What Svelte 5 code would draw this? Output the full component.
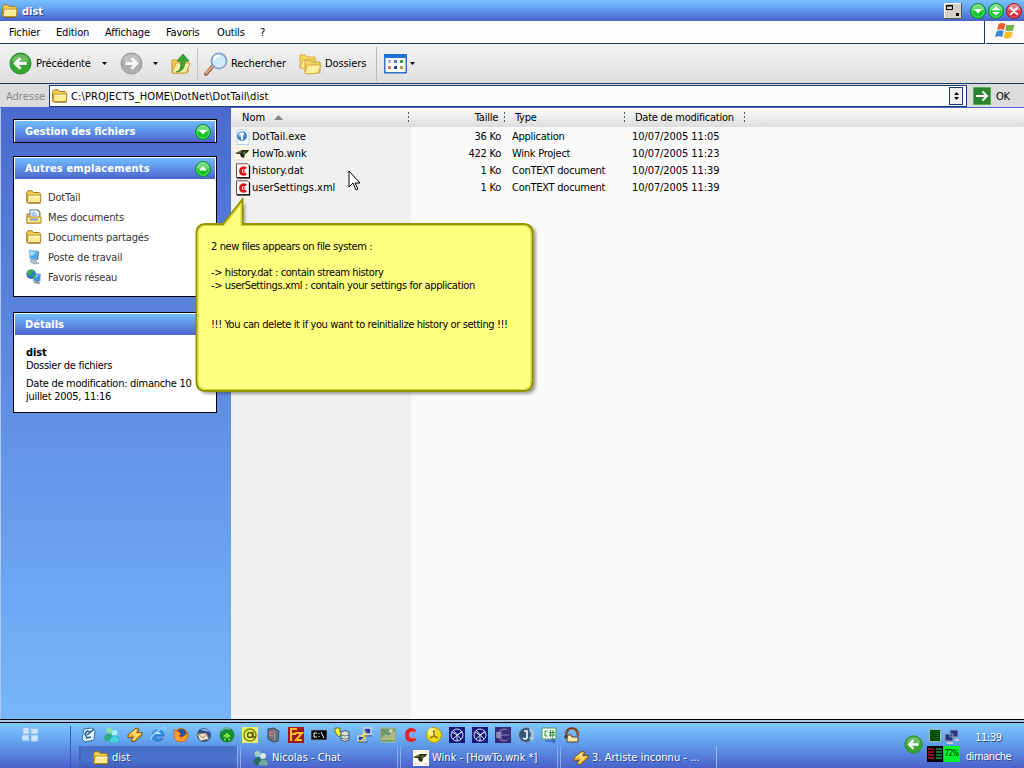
<script>
  const menus = [['Fichier', 47], ['Edition', 49], ['Affichage', 61], ['Favoris', 51], ['Outils', 43], ['?', 20]];
  const places = [
    ['folder', 'DotTail'],
    ['docs', 'Mes documents'],
    ['folder', 'Documents partagés'],
    ['computer', 'Poste de travail'],
    ['network', 'Favoris réseau'],
  ];
  const files = [
    ['exe', 'DotTail.exe', '36 Ko', 'Application', '10/07/2005 11:05'],
    ['wink', 'HowTo.wnk', '422 Ko', 'Wink Project', '10/07/2005 11:23'],
    ['context', 'history.dat', '1 Ko', 'ConTEXT document', '10/07/2005 11:39'],
    ['context', 'userSettings.xml', '1 Ko', 'ConTEXT document', '10/07/2005 11:39'],
  ];
  const launchers = ['desktop', 'msn', 'winamp', 'ie', 'firefox', 'thunderbird', 'tree', 'at', 'server', 'filezilla', 'cmd', 'database', 'putty', 'image', 'redc', 'smiley', 'cube', 'cube', 'eclipse', 'jedit', 'csharp', 'home'];
  const tasks = [['folder', 'dist'], ['chat', 'Nicolas - Chat'], ['wink', 'Wink - [HowTo.wnk *]'], ['winamp', '3. Artiste inconnu - ...']];
</script>

{#snippet icon(name, size = 16)}
  <svg class="icon" width={size} height={size} viewBox="0 0 16 16" aria-hidden="true">
    {#if name === 'folder'}
      <path d="M.7 13V3.2L2 1.8h4l1.4 1.7h5.8l1 1.1V13z" fill="#f3cf58" stroke="#a87b12" />
      <path d="M1 13.300 2 6.200h13L14.300 13.600H2z" fill="#ffeb94" stroke="#b88a1c" />
      <path d="M3 7.200h11" stroke="#fffbd2" />
      <path d="M2 14.500h12.400" stroke="#6b5a28" opacity=".6" />
    {:else if name === 'docs'}
      <path d="M1 14V5h3V1h8l2 2v11z" fill="#edc553" stroke="#a87b12" />
      <path d="M4 1h7l2.5 2.5V10H4z" fill="#f1f8ff" stroke="#6592c4" />
      <path d="M5.5 4h4M5.5 6h6" stroke="#629be0" />
      <path d="M1 8h14v6H1z" fill="#ffe58b" stroke="#b4881d" />
      <path d="M4 10.5h8" stroke="#75a4d1" stroke-width="2" />
    {:else if name === 'computer'}
      <path d="m3 1 9 1-1 9-7-1z" fill="#4aa9f3" stroke="#a6c4dc" />
      <path d="m4 2 6 1-4 4-2-1z" fill="#a9ddff" />
      <path d="m12 2 1 1-1 8-1 0z" fill="#42657f" />
      <path d="m6 10 4 1v2l3 1-4 1-5-2z" fill="#b9c6cf" stroke="#7d8d99" stroke-width=".6" />
    {:else if name === 'network'}
      <path d="m7 4 8 1-1 8-7-1z" fill="#3f8fe0" stroke="#b8d3e8" />
      <path d="m8 5 5 1-5 4z" fill="#8accff" />
      <path d="m10 12 3 1 1 2-7-1z" fill="#7c8b99" />
      <circle cx="5.2" cy="5.2" r="4.8" fill="#2a76c4" />
      <path d="M2 2c2-2 5-1 6 0L6 4 5 7 3 6 1 5zM7 6l3-1-1 4-2 1z" fill="#3daa4e" />
    {:else if name === 'exe'}
      <path d="M2 .5h9l3 3v12H2z" fill="#f8fcff" stroke="#b9d5e2" />
      <circle cx="7" cy="7" r="5" fill="#427fbd" /><circle cx="6" cy="5" r="3" fill="#9bc8ea" />
      <path d="M7 4v7M5 5h4" stroke="#fff" stroke-width="1.8" />
    {:else if name === 'wink'}
      <path d="M0 0h16v16H0z" fill="#fbfbe7" />
      <path d="M1 2h3M12 2h3M1 14h4M11 14h4" stroke="#f6dde0" stroke-width="2" />
      <path d="m0 7 3-1 4-2h7l-1 2-3 2-1 4-3-1-1-3H3z" fill="#29291b" />
      <path d="m8 6 3-1-2 4z" fill="#5e9451" /><path d="M3 6h4" stroke="#a89432" />
    {:else if name === 'context'}
      <path d="M1.500 .8h11l2 2v12h-13z" fill="#fff" stroke="#73494c" />
      <path d="M14.500 2.500v12.300H2" fill="none" stroke="#000" stroke-width="1.3" />
      <path d="M10.800 5.800C9.500 3.700 5.500 4.300 5.500 8s4 4.300 5.300 2.200" fill="none" stroke="#d5151c" stroke-width="2.800" />
      <path d="M8 6.500h2v1H9v1h1.500v1H8z" fill="#e9242a" />
    {:else if name === 'desktop'}
      <path d="m3 2 8-1 3 3-1 9-9 2-3-3z" fill="#e4f2fa" stroke="#356fa0" />
      <path d="M10 5 6 4 4 7l2 4 4-1M6 8l7-6" fill="none" stroke="#1c6199" stroke-width="1.5" />
    {:else if name === 'msn'}
      <circle cx="5" cy="3.5" r="3" fill="#8edfa2" /><path d="M0 10q3-5 7-3l3 3-4 4H1z" fill="#2cad82" />
      <circle cx="10.5" cy="6" r="3" fill="#a5f4f1" /><path d="M5 14q3-7 8-5l3 4-2 3H7z" fill="#42d2dc" stroke="#218ba2" stroke-width=".5" />
    {:else if name === 'chat'}
      <circle cx="4.5" cy="4" r="3" fill="#9bd0bc" /><path d="M0 11q4-6 7-3l2 4-2 3H2z" fill="#276d60" />
      <circle cx="10" cy="6" r="3" fill="#d3ede8" /><path d="M5 14q4-7 9-4l2 4-2 2H6z" fill="#6ba8a7" stroke="#285f62" stroke-width=".6" />
    {:else if name === 'winamp'}
      <path d="m1 8 8-7 3 1-2 4 5-1 0 3-8 7-3-1 2-4-5 1z" fill="#f5a51b" stroke="#6c5428" />
      <path d="m3 8 6-5-2 5 5-1-6 6" fill="none" stroke="#ffe782" stroke-width="1.5" />
    {:else if name === 'ie'}
      <path d="M14 9H5q1 4 5 3l3-1c-2 5-12 4-11-3S14 1 14 9z" fill="#3593df" stroke="#1355a1" stroke-width=".6" />
      <path d="M5 7q3-4 6 0" fill="#c5e9ff" /><path d="M1 13Q1 8 9 3t6 0" fill="none" stroke="#90cfff" stroke-width="1.5" />
    {:else if name === 'firefox'}
      <circle cx="8" cy="8" r="7" fill="#e76a11" /><circle cx="8.500" cy="6.500" r="4.500" fill="#2655a4" />
      <path d="M1 2q1 3 4 2l3 3-2 2q4 3 8-4l1 4c-2 8-13 8-14 0z" fill="#ff9c22" stroke="#ad3c0e" stroke-width=".5" />
    {:else if name === 'thunderbird'}
      <circle cx="8" cy="8" r="7" fill="#2b4e86" /><path d="m1 7 9-1 3 6-9 2z" fill="#eee7d2" stroke="#857261" />
      <path d="m2 7 5 4 4-4" fill="none" stroke="#9f7d63" /><path d="M4 3q6-4 10 2L9 4z" fill="#7db0e1" />
    {:else if name === 'tree'}
      <circle cx="8" cy="8" r="7.5" fill="#168c35" /><path d="M8 5 3 10h3l-2 4h3v-3h2v3h3l-2-4h3z" fill="#6fea3a" stroke="#0a552c" stroke-width=".5" /><path d="M2 4l4-3 5 1" fill="none" stroke="#5fb8a3" stroke-width="2" />
    {:else if name === 'at'}
      <path d="M0 0h16v16H0z" fill="#e8ee6f" /><circle cx="8" cy="8" r="6" fill="none" stroke="#7d8b00" stroke-width="1.6" />
      <circle cx="8" cy="8" r="2.5" fill="none" stroke="#585c00" stroke-width="1.5" /><path d="M11 5v5h3" fill="none" stroke="#585c00" stroke-width="1.5" />
    {:else if name === 'server'}
      <path d="m3 2 6-1 5 3-1 10-5 1-5-3z" fill="#66737a" stroke="#3a4a59" /><path d="m9 3 1 11" stroke="#9ba2a1" /><path d="M4 5l4 1M4 8l4 1" stroke="#db7c87" stroke-width="1.5" />
    {:else if name === 'filezilla'}
      <path d="M0 0h16v16H0z" fill="#a41414" /><path d="M3 14V2h6M3 7h5M7 6h7l-6 7h6" fill="none" stroke="#ffc12b" stroke-width="2" />
    {:else if name === 'cmd'}
      <path d="M0 3h16v10H0z" fill="#050505" stroke="#8594a8" stroke-width=".8" /><path d="M6 6H3v4h3M8 6v1M8 9v1M10 5l3 6" stroke="#f4f4f4" fill="none" />
    {:else if name === 'database'}
      <path d="M1 1h5v4h3l-4 5-4-5z" fill="#ffef30" stroke="#4f7420" /><path d="M7 5q4-3 8 0v8q-4 3-8 0z" fill="#d7dddc" stroke="#405762" /><path d="M7 8q4 2 8 0M7 11q4 2 8 0" stroke="#637985" fill="none" />
    {:else if name === 'putty'}
      <path d="M7 1h7v6H7zM1 9h7v5H1z" fill="#253fb7" stroke="#d6d7cf" stroke-width="1.500" /><path d="m9 5-4 4h4l-5 5" stroke="#f7e53b" fill="none" stroke-width="1.500" /><path d="M7 9h8M1 15h10" stroke="#565b65" />
    {:else if name === 'image'}
      <path d="M0 1h16v14H0z" fill="#779a72" stroke="#a9bc95" /><path d="M1 12q6-7 8-4l6-4v9H1z" fill="#adbb80" /><path d="m3 3 5 5 5-4" stroke="#547d61" fill="none" /><circle cx="11" cy="4" r="2" fill="#d8d69c" />
    {:else if name === 'redc'}
      <path d="M12 5C9 1 4 3 4 8s5 7 8 3" fill="none" stroke="#e32025" stroke-width="3.800" /><path d="M8 5h4M8 11h4" stroke="#fd8c86" />
    {:else if name === 'smiley'}
      <circle cx="8" cy="8" r="7.500" fill="#eddb18" stroke="#b29b10" /><circle cx="6" cy="5" r="4" fill="#fff580" /><circle cx="8" cy="4.500" r="1.200" fill="#8b7415" /><path d="M8 5v4l-4 2m4-2 4 2" stroke="#977b16" stroke-width="1.500" fill="none" />
    {:else if name === 'cube'}
      <path d="M0 0h16v16H0z" fill="#13187b" /><circle cx="8" cy="8" r="6" fill="none" stroke="#dfdef4" /><path d="m3 5 5 3 5-3M8 8v6M4 12l9-8M4 3l8 9" stroke="#dfdef4" fill="none" />
    {:else if name === 'eclipse'}
      <path d="M0 0h16v16H0z" fill="#362c75" /><circle cx="9" cy="8" r="6" fill="#544891" stroke="#8c83ba" /><path d="M1 6h13M1 8h13M1 10h13" stroke="#c8c3e2" /><circle cx="11" cy="8" r="5" fill="#372e78" /><path d="M2 8h12" stroke="#8f87b8" />
    {:else if name === 'jedit'}
      <circle cx="8" cy="8" r="7.500" fill="#35597c" stroke="#8aa6bd" /><path d="M12 1a7 7 0 0 1 1 13l-2-3a4 4 0 0 0 0-7z" fill="#a9c5dd" /><path d="M6 4h3v7q-2 2-4 0" fill="none" stroke="#fff" stroke-width="1.600" />
    {:else if name === 'csharp'}
      <path d="M1 1h14v11H1z" fill="#f5fff2" stroke="#43a346" /><path d="M6.500 4H4v5h2.500M9.500 3v7M12 3v7M8 5.500h6M8 8h6" stroke="#22862b" fill="none" /><path d="M4 14h10m-3-3 3 3-2 2" stroke="#386cc3" fill="none" stroke-width="1.500" />
    {:else if name === 'home'}
      <path d="M2 9C1-1 15-1 14 9" fill="none" stroke="#583423" stroke-width="2.600" /><path d="M2 9C1 0 15 0 14 9" fill="none" stroke="#c77b3d" /><path d="M3 8h4l1 2h6v5H3z" fill="#ffecad" stroke="#4f3826" /><path d="M0 10h4M2 8v4" stroke="#332d2c" />
    {/if}
  </svg>
{/snippet}

{#snippet round(kind, size = 16)}
  <svg class="icon" width={size} height={size} viewBox="0 0 16 16" aria-hidden="true">
    <circle cx="8" cy="8" r="7.500" fill={kind === 'close' ? '#e8222d' : '#12c524'} stroke={kind === 'close' ? '#961a2d' : '#078c38'} stroke-width="1" />
    <circle cx="8" cy="8" r="6.200" fill="none" stroke="#fff" stroke-opacity=".35" />
    <path d="M2 7a6 6 0 0 1 12 0Q8 10 2 7z" fill="#fff" opacity=".38" />
    {#if kind === 'down'}<path d="M4 6h8l-4 4.600z" fill="#fff" />
    {:else if kind === 'up'}<path d="M4 9.600h8L8 5z" fill="#fff" />
    {:else if kind === 'both'}<path d="M4 7h8L8 3.200zM4 9h8l-4 3.800z" fill="#fff" />
    {:else if kind === 'close'}<path d="m5 5 6 6m0-6-6 6" stroke="#fff" stroke-width="2.200" stroke-linecap="round" />{/if}
  </svg>
{/snippet}

{#snippet nav(kind, size)}
  <svg class="icon" width={size} height={size} viewBox="0 0 24 24" aria-hidden="true">
    <circle cx="12" cy="12" r="11" fill={kind === 'back' ? '#35a52d' : '#adadad'} stroke={kind === 'back' ? '#2b8731' : '#999'} />
    <path d="M3 9a9.500 9.500 0 0 1 18 0q-9 6-18 0z" fill="#fff" opacity=".25" />
    {#if kind === 'back'}<path d="M18.500 12H6.500m5.500-5.500L6.500 12l5.500 5.500" fill="none" stroke="#fff" stroke-width="3" />
    {:else}<path d="M5.500 12h12m-5.500-5.500 5.500 5.500-5.500 5.500" fill="none" stroke="#f7f7f7" stroke-width="3" />{/if}
  </svg>
{/snippet}

<div class="screen">
  <header class="title">
    {@render icon('folder')}<b>dist</b>
    <div class="controls">
      <svg width="18" height="16" viewBox="0 0 18 16"><path d="M0 0h18v16H0z" fill="#d5d1c8" /><path d="M.5 15V.5H17" stroke="#fff" fill="none" /><path d="M17.500 0v15.500H0" stroke="#555" fill="none" /><path d="M2.500 2.500h6v4h-6z" fill="none" stroke="#000" /><path d="M2 3h7" stroke="#000" /><path d="M12 10h3v3h-3z" /></svg>
      <span class="rounds">{@render round('down')}{@render round('both')}{@render round('close')}</span>
    </div>
  </header>

  <nav class="menu">
    <div class="menu-items">{#each menus as [m, w]}<span style:width="{w}px">{m}</span>{/each}</div>
    <div class="flag">
      <svg width="20" height="19" viewBox="0 0 20 19"><path d="M3.500 2q3.500-2 7 0L9 8Q5.500 6.500 2 8z" fill="#ea5d2d" /><path d="M11.500 2.500q4 1.500 8 0L18 8.500q-4 1.500-7.700 0z" fill="#6fb43f" /><path d="M1.700 9q3.500-1.600 7 0l-1.500 6q-3.500-1.600-7.200 0z" fill="#3b87d7" /><path d="M10 9.500q4 1.500 7.700 0l-1.500 6q-4 2-7.700 0z" fill="#f6bf27" /></svg>
    </div>
  </nav>

  <div class="toolbar">
    <div class="tool back">{@render nav('back', 23)}<span>Précédente</span><i class="caret"></i></div>
    <div class="tool fwd">{@render nav('forward', 23)}<i class="caret"></i></div>
    <div class="tool upfolder">
      <svg width="20" height="24" viewBox="0 0 20 24"><path d="M1 8h5l2 2h9v10l-4 1H1z" fill="#efcc5a" stroke="#c29529" /><path d="m1 21 4-10h14l-4 10z" fill="#fff0a1" stroke="#c9a03b" /><path d="M5 20q5 0 5-11H6l6-7 6 7h-4q0 11-9 11z" fill="#37a92e" stroke="#22752a" stroke-width=".7" /></svg>
    </div>
    <div class="tool search">
      <svg width="24" height="24" viewBox="0 0 24 24"><path d="m9 14-7 8" stroke="#9d684d" stroke-width="4" stroke-linecap="round" /><path d="m9 14-7 7" stroke="#e0a47b" stroke-width="2" stroke-linecap="round" /><circle cx="15" cy="9" r="7.500" fill="#cfebfd" stroke="#82a5cb" stroke-width="1.800" /><path d="M10 8q1-5 6-4" stroke="#fff" stroke-width="2.500" fill="none" /></svg>
      <span>Rechercher</span>
    </div>
    <div class="tool folders">
      <svg width="23" height="22" viewBox="0 0 23 22"><path d="M1 15V2h5l2 2h8v11z" fill="#f4d55d" stroke="#d5ad40" /><path d="m1 15 3-8h13l-3 9z" fill="#ffeb9a" stroke="#d8b24d" /><path d="M6 19V7h5l2 2h8v11z" fill="#f4d55d" stroke="#cda53c" /><path d="m6 20 2-8h14l-3 8-10 1z" fill="#fff0a0" stroke="#cda53c" /></svg>
      <span>Dossiers</span>
    </div>
    <div class="tool views">
      <svg width="23" height="20" viewBox="0 0 23 20"><path d="M.75.75h21.500v18H.75z" fill="#fff" stroke="#2f72cb" stroke-width="1.500" /><path d="M0 0h23v4H0z" fill="#1e73d7" /><path d="M4 6h3v3H4z" fill="#abadc5" /><path d="M10 6h3v3h-3z" fill="#507acb" /><path d="M16 6h3v3h-3z" fill="#40943f" /><path d="M4 12h3v3H4z" fill="#d77a56" /><path d="M10 12h3v3h-3z" fill="#163f95" /><path d="M16 12h3v3h-3z" fill="#b49b42" /></svg>
      <i class="caret"></i>
    </div>
  </div>

  <div class="address">
    <span class="label">Adresse</span>
    <div class="field">{@render icon('folder')}<span>C:\PROJECTS_HOME\DotNet\DotTail\dist</span>
      <div class="spin"><svg width="5" height="8" viewBox="0 0 5 8"><path d="M0 3h5L2.500 0zM0 5h5L2.500 8z" /></svg></div>
    </div>
    <div class="go"><svg width="18" height="18" viewBox="0 0 18 18"><path d="M.5.5h17v17H.5z" fill="#27862d" stroke="#5aac58" /><path d="M3 9h11M9.500 4.500 14 9l-4.500 4.500" fill="none" stroke="#fff" stroke-width="2" /></svg>OK</div>
  </div>

  <main class="content">
    <aside>
      <section class="panel closed"><h2>Gestion des fichiers {@render round('down')}</h2></section>
      <section class="panel places"><h2>Autres emplacements {@render round('up')}</h2>
        <ul>{#each places as [i, t]}<li>{@render icon(i)}<span>{t}</span></li>{/each}</ul>
      </section>
      <section class="panel details"><h2>Détails</h2>
        <div class="info"><b>dist</b><span>Dossier de fichiers</span><p>Date de modification: dimanche 10<br />juillet 2005, 11:16</p></div>
      </section>
    </aside>
    <div class="list">
      <div class="row head"><span class="c-name">Nom <i class="sort"></i></span><span class="c-size">Taille</span><span class="c-type">Type</span><span class="c-date">Date de modification</span></div>
      <div class="files">
        {#each files as [i, n, s, t, d]}
          <div class="row"><span class="c-name">{@render icon(i)}{n}</span><span class="c-size">{s}</span><span class="c-type">{t}</span><span class="c-date">{d}</span></div>
        {/each}
      </div>
    </div>
  </main>

  <footer>
    <div class="start"><svg width="19" height="18" viewBox="0 0 19 18"><path d="M2 2q3-1 6 0v6H2zm8 0q3 1 7 0v6h-7zM1 9h7v6q-3-1-7 0zm9 0h7v6q-3 1-7 0z" fill="#cbe5ff" stroke="#87b1e8" stroke-width=".6" /></svg></div>
    <div class="middle">
      <div class="launch">{#each launchers as l}{@render icon(l)}{/each}</div>
      <div class="tasks">{#each tasks as [i, t], n}<div class="task" class:active={n === 0}>{@render icon(i)}<span>{t}</span></div>{/each}</div>
    </div>
    <div class="tray">
      {@render nav('back', 19)}
      <div class="meters">
        <svg width="12" height="13" viewBox="0 0 12 13"><path d="M.5.5h11v12H.5z" fill="#043d06" stroke="#9bc49f" /><path d="M2 2v10M4 2v10M6 2v10M8 2v10M10 2v10" stroke="#19851e" stroke-dasharray="1 1" /></svg>
        <svg width="16" height="16" viewBox="0 0 16 16"><path d="M6 1h8v7H6zM1 5h8v7H1z" fill="#28377c" stroke="#8d98c5" /><path d="M3 14h6M11 11h4" stroke="#d5c7ca" stroke-width="2" /></svg>
        <svg width="16" height="16" viewBox="0 0 16 16"><path d="M0 0h16v16H0z" /><path d="M1 3h6M1 6h6M1 9h6M1 12h6" stroke="#8c1118" stroke-width="2" /><path d="M9 3h6M9 6h6M9 9h6M9 12h6" stroke="#087c2c" stroke-width="2" /></svg>
        <span class="pct">72%</span>
      </div>
      <div class="clock"><span>11:39</span><span>dimanche</span></div>
    </div>
  </footer>

  <div class="callout">
    <svg width="348" height="204" viewBox="0 0 348 204">
      <path d="M14 29h17L52 6v23h282q9 0 9 9v149q0 10-10 10H16q-10 0-10-10V40q0-11 9-11z" fill="#303030" opacity=".45" class="shadow" />
      <path d="M13 27h17L49.500 2.500V27H330q9.500 0 9.500 9.500v148q0 9.500-9.500 9.500H13q-9.500 0-9.500-9.500v-148q0-9.500 9.500-9.500z" fill="#ffff80" stroke="#939300" stroke-width="2" />
      <path d="M13 28.500h18L48 7.500v21h281q9 0 9 9v146q0 9-9 9H14q-9 0-9-9v-146q0-9 8-9z" fill="none" stroke="#d2d23f" />
    </svg>
    <p>2 new files appears on file system :<br /><br />-&gt; history.dat : contain stream history<br />-&gt; userSettings.xml : contain your settings for application<br /><br /><br />!!! You can delete it if you want to reinitialize history or setting !!!</p>
  </div>
  <svg class="cursor" width="13" height="22" viewBox="0 0 13 22"><path d="M1 1v16l4-4 3 7 2-1-3-6h5z" fill="#fff" stroke="#000" /></svg>
</div>

<style>
  :global(body) { margin: 0; overflow: hidden; }
  .screen { position: relative; width: 1024px; height: 768px; display: flex; flex-direction: column; overflow: hidden; background: #fafafa; color: #000; font: 11px/13px "DejaVu Sans Condensed", "DejaVu Sans", sans-serif; font-stretch: condensed; letter-spacing: -.3px; white-space: nowrap; }
  .screen * { box-sizing: border-box; }
  svg { display: block; flex: none; }
  .title { height: 21px; flex: none; display: flex; align-items: center; padding: 0 2px; background: linear-gradient(#78c0ff, #609eee 45%, #4961c9); color: #fff; }
  .title b { margin-left: 4px; padding-top: 1px; text-shadow: 1px 1px #243d8c; letter-spacing: 0; }
  .controls { margin-left: auto; display: flex; align-items: center; gap: 8px; }
  .rounds { display: flex; gap: 2px; }
  .menu { height: 23px; flex: none; display: flex; background: #fdfdfd; letter-spacing: -.15px; }
  .menu-items { flex: 1; display: flex; align-items: center; padding-left: 9px; border-right: 1px solid #163b69; border-bottom: 1px solid #163b69; }
  .flag { width: 38px; margin-left: 1px; padding: 1px 0 0 9px; border-bottom: 1px solid #163b69; }
  .toolbar { height: 40px; flex: none; display: flex; align-items: center; border-bottom: 1px solid #163b69; background: linear-gradient(#f3f3f3, #dedede); letter-spacing: -.1px; }
  .tool { display: flex; align-items: center; height: 34px; }
  .caret { width: 5px; height: 3px; background: #000; clip-path: polygon(0 0, 100% 0, 50% 100%); }
  .back { width: 111px; padding-left: 9px; }
  .back span { width: 65px; margin-left: 4px; }
  .back .caret { margin-left: 1px; }
  .fwd { width: 58px; padding-left: 9px; gap: 10px; }
  .upfolder { width: 28px; padding-left: 2px; }
  .search { width: 100px; padding-left: 6px; border-left: 1px solid #c5c5c5; gap: 3px; }
  .folders { width: 79px; padding-left: 2px; gap: 3px; }
  .views { padding-left: 7px; gap: 3px; border-left: 1px solid #b9b9b9; }
  .address { height: 23px; flex: none; display: flex; align-items: center; background: #dcdcdc; padding-top: 1px; }
  .label { width: 49px; padding-left: 6px; color: #858585; letter-spacing: 0; }
  .field { width: 918px; height: 22px; display: flex; align-items: center; padding: 0 3px 0 2px; border: 1px solid #163b69; background: #fcfcfc; }
  .field > span { margin-left: 3px; padding-top: 1px; letter-spacing: .1px; }
  .spin { margin-left: auto; width: 14px; height: 18px; border: 1px solid #163b69; background: #f1f1f1; display: grid; place-items: center; }
  .go { display: flex; align-items: center; gap: 5px; margin-left: 6px; }
  .content { height: 612px; flex: none; display: flex; border-top: 1px solid #4c65ce; }
  aside { width: 231px; border-left: 1px solid #b2c7f0; padding: 11px 14px 0 12px; background: linear-gradient(#4b6acf, #77b6fa); }
  .panel { border: 1px solid #000; background: #fff; padding: 1px; }
  h2 { margin: 0; height: 21px; display: flex; align-items: center; justify-content: space-between; padding: 0 4px 0 10px; font-size: 11px; line-height: 13px; color: #fff; background: linear-gradient(#72bdff, #4b63cc); letter-spacing: 0; }
  .closed { height: 24px; }
  .places { height: 141px; margin-top: 13px; }
  .places h2 { letter-spacing: .15px; }
  .details { height: 101px; margin-top: 15px; }
  ul { list-style: none; margin: 0; padding: 8px 0 0 11px; }
  li { height: 20px; display: flex; align-items: center; gap: 6px; color: #333; letter-spacing: -.15px; }
  .info { padding: 11px 0 0 11px; display: flex; flex-direction: column; letter-spacing: -.28px; }
  .info b { letter-spacing: -.1px; }
  .info p { margin: 5px 0 0; }
  .list { flex: 1; background: linear-gradient(90deg, #f0f0f0 180px, #fafafa 180px); }
  .row { display: grid; grid-template-columns: 179px 96px 120px 120px; height: 17px; align-items: center; }
  .row.head { height: 19px; background: linear-gradient(#fcfcfc, #dcdcdc); }
  .files { padding-top: 1px; }
  .row > span { display: flex; align-items: center; height: 100%; }
  .row > .c-name { gap: 1px; padding-left: 4px; letter-spacing: -.02px; }
  .c-size { justify-content: flex-end; padding-right: 5px; letter-spacing: -.25px; }
  .c-type { padding-left: 6px; letter-spacing: -.25px; }
  .c-date { padding-left: 6px; letter-spacing: -.08px; }
  .head > span { background: linear-gradient(#555 0 2px, transparent 0) right 1px top 4px / 1px 4px repeat-y; clip-path: inset(4px 0 3px 0); }
  .row.head .c-name { padding-left: 11px; gap: 9px; }
  .head .c-size { padding-right: 8px; }
  .head .c-type, .head .c-date { padding-left: 9px; letter-spacing: -.25px; }
  .sort { width: 9px; height: 5px; background: #848484; clip-path: polygon(50% 0, 100% 100%, 0 100%); }
  footer { height: 49px; flex: none; display: flex; border-top: 1px solid #000; background: linear-gradient(#a9c8e8 0 2px, #000 2px 3px, #7fc4ff 3px 5px, #68aaf2 18px, #4962cb 100%); color: #fff; text-shadow: 1px 1px #2a4484; }
  .start { width: 71px; padding: 6px 0 0 21px; position: relative; background: linear-gradient(#395da8, #395da8) right 0 top 6px / 1px 100% no-repeat; }
  .middle { width: 833px; }
  .launch { display: flex; gap: 7px; padding: 7px 0 0 10px; height: 26px; }
  .tasks { display: flex; padding-left: 8px; letter-spacing: .03px; }
  .task { width: 160px; height: 23px; display: flex; align-items: center; gap: 3px; padding-left: 12px; border-right: 4px double #86aeea; }
  .task:last-child { width: 156px; border-right: 1px solid #97bdf2; }
  .task.active { width: 162px; padding-left: 12px; background: linear-gradient(#476fc4, #4b73ce 60%, #4058b7) padding-box; border-left: 2px solid #4065b5; }
  .tray { flex: 1; display: flex; padding-top: 8px; }
  .tray > :global(svg) { margin-top: 7px; }
  .meters { display: grid; grid-template: 17px 17px / 17px 17px; margin: 1px 0 0 3px; justify-items: center; }
  .pct { width: 16px; height: 16px; background: #00f22a; color: #020; font-size: 8px; line-height: 16px; text-align: center; text-shadow: none; letter-spacing: -.7px; }
  .clock { flex: 1; display: flex; flex-direction: column; align-items: center; gap: 6px; padding: 3px 7px 0 0; letter-spacing: -.4px; }
  .callout { position: absolute; left: 193px; top: 197px; }
  .shadow { filter: blur(1.5px); }
  .callout p { position: absolute; left: 18px; top: 43px; margin: 0; letter-spacing: -.4px; }
  .cursor { position: absolute; left: 348px; top: 170px; }
</style>
